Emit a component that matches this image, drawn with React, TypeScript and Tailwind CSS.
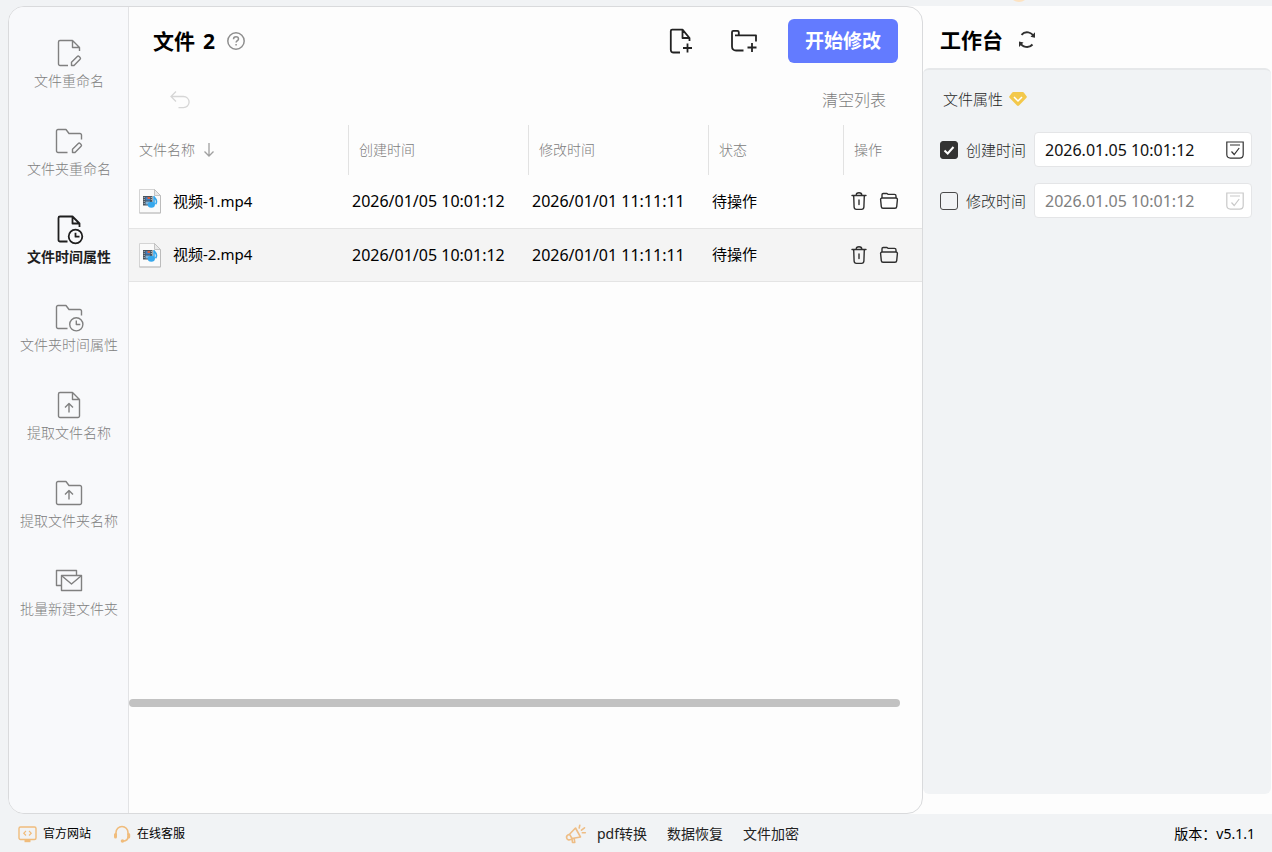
import React, { useState } from "react";

type IconProps = { className?: string };

const DOC_OPEN = "M13 26.5H5a1.5 1.5 0 0 1-1.5-1.5V3A1.5 1.5 0 0 1 5 1.5h12.5l7 7v3.5M17.5 1.5v7h7";
const DOC_FULL = "M17.5 1.5H5A1.5 1.5 0 0 0 3.5 3v22A1.5 1.5 0 0 0 5 26.5h18a1.5 1.5 0 0 0 1.5-1.5V8.5zM17.5 1.5v7h7";
const FOLDER_OPEN = "M12.5 25.5H3A1.5 1.5 0 0 1 1.5 24V4A1.5 1.5 0 0 1 3 2.5h8l3 4h11A1.5 1.5 0 0 1 26.5 8v4.5";
const FOLDER_FULL = "M1.5 24V4A1.5 1.5 0 0 1 3 2.5h8l3 4h11A1.5 1.5 0 0 1 26.5 8v16a1.5 1.5 0 0 1-1.5 1.5H3A1.5 1.5 0 0 1 1.5 24z";
const DOC_PENCIL = "M16.5 26.5v-3.2l5.8-5.8a1.3 1.3 0 0 1 1.8 0l1 1a1.3 1.3 0 0 1 0 1.8l-6.1 6.2z";
const FOLDER_PENCIL = "M17.5 25.5v-3.2l5.8-5.8a1.3 1.3 0 0 1 1.8 0l1 1a1.3 1.3 0 0 1 0 1.8L20 25.5z";

function NavIcon({ paths, bold, clock }: { paths: string[]; bold?: boolean; clock?: [number, number, number] }) {
  return (
    <svg viewBox="0 0 28 28" className="h-7 w-7 overflow-visible" fill="none" stroke="currentColor" strokeWidth={bold ? 1.8 : 1.4} strokeLinejoin="round" aria-hidden="true">
      {paths.map((d) => (
        <path key={d} d={d} />
      ))}
      {clock && (
        <>
          <circle cx={clock[0]} cy={clock[1]} r={clock[2]} />
          <path d={`M${clock[0]} ${clock[1] - 3.8}v4h4`} />
        </>
      )}
    </svg>
  );
}

const NAV = [
  { label: "文件重命名", icon: <NavIcon paths={[DOC_OPEN, DOC_PENCIL]} /> },
  { label: "文件夹重命名", icon: <NavIcon paths={[FOLDER_OPEN, FOLDER_PENCIL]} /> },
  { label: "文件时间属性", icon: <NavIcon bold paths={["M12.5 26.5H5a1.5 1.5 0 0 1-1.5-1.5V3A1.5 1.5 0 0 1 5 1.5h12.5l7 7v3.5M17.5 1.5v7h7"]} clock={[20.5, 21.5, 6.8]} /> },
  { label: "文件夹时间属性", icon: <NavIcon paths={[FOLDER_OPEN]} clock={[21.3, 21.3, 6.6]} /> },
  { label: "提取文件名称", icon: <NavIcon paths={[DOC_FULL, "M14 21.5v-9M10 16.5l4-4 4 4"]} /> },
  { label: "提取文件夹名称", icon: <NavIcon paths={[FOLDER_FULL, "M14 20.5v-9M10 15.5l4-4 4 4"]} /> },
  { label: "批量新建文件夹", icon: <NavIcon paths={["M6.5 18.5h-5v-15h20v5", "M6.5 8.5h20v15h-20z", "M7 9l9.500 8L26 9"]} /> },
];

const FILES = [
  { name: "视频-1.mp4", created: "2026/01/05 10:01:12", modified: "2026/01/01 11:11:11", status: "待操作" },
  { name: "视频-2.mp4", created: "2026/01/05 10:01:12", modified: "2026/01/01 11:11:11", status: "待操作" },
];

function VideoFileIcon() {
  return (
    <svg viewBox="0 0 22 26" className="h-[26px] w-[22px] shrink-0" aria-hidden="true">
      <path d="M.5 1.500h15l6 6v17.500H.5z" fill="#fafafa" stroke="#d4d4d4" />
      <path d="M.5 25h21V8" fill="none" stroke="#bcbcbc" />
      <path d="M15.500 1.500v6h6z" fill="#e9e9e9" stroke="#b8b8b8" strokeWidth=".8" />
      <path d="M4 8h9.500v9.500H4z" fill="#4a535c" />
      <path d="M6.500 9H11v3.500H6.500z" fill="#3f7fc0" />
      <path d="M8.500 9H11v2H8.500z" fill="#d8603f" />
      <path d="M6.500 13.500H11v3H6.500z" fill="#7fb4dc" />
      <path d="M5.200 9v8M12.300 9v4" stroke="#c7ced4" strokeWidth=".9" strokeDasharray="1 1" />
      <ellipse cx="12.300" cy="16.800" rx="3.600" ry="3" fill="#35a7ec" />
      <path d="M15 17V8c.3 2.200 2.500 2.800 2.500 5.500 0 1.400-.5 2.200-1 2.800" fill="none" stroke="#35a7ec" strokeWidth="1.600" />
    </svg>
  );
}

function TrashIcon() {
  return (
    <svg viewBox="0 0 18 20" className="h-5 w-[18px]" fill="none" stroke="#2f2f2f" strokeWidth="1.400" strokeLinecap="round" strokeLinejoin="round" aria-hidden="true">
      <path d="M2 4.500h14M6.200 4.200c0-1.600.8-2.400 2.800-2.400s2.800.8 2.800 2.400M3.700 4.800l.4 11.200c.1 1.700.9 2.400 2.300 2.400h5.200c1.400 0 2.200-.7 2.300-2.400l.4-11.200M9 9v4.500" />
    </svg>
  );
}

function OpenFolderIcon() {
  return (
    <svg viewBox="0 0 20 20" className="h-5 w-5" fill="none" stroke="#2f2f2f" strokeWidth="1.400" strokeLinejoin="round" aria-hidden="true">
      <path d="M3 7V3.700c0-.7.400-1.200 1.200-1.200h3.600c.7 0 1 .9 1.700.9h6c1 0 1.500.5 1.500 1.500V7" />
      <path d="M3.200 7h13.600c1.100 0 1.700.6 1.600 1.600l-.7 7c-.1 1.100-.7 1.700-1.700 1.700H4c-1 0-1.600-.6-1.700-1.700l-.7-7C1.500 7.600 2.100 7 3.200 7z" />
    </svg>
  );
}

function CalendarCheckIcon({ className }: IconProps) {
  return (
    <svg viewBox="0 0 18 18" className={className} fill="none" stroke="currentColor" strokeWidth="1.200" aria-hidden="true">
      <path d="M.8 1h16.400v12.500c0 2.200-1.300 3.600-3.600 3.600H4.400C2.100 17.100.8 15.700.8 13.500z" />
      <path d="M4 4h10M5.500 10.500l2.700 3 5-6.500" />
    </svg>
  );
}

function TimeField({ id, label, checked, onToggle }: { id: string; label: string; checked: boolean; onToggle: () => void }) {
  return (
    <div className="flex items-center">
      <span className="relative flex size-[18px] shrink-0">
        <input
          id={id}
          type="checkbox"
          checked={checked}
          onChange={onToggle}
          className="peer size-[18px] appearance-none rounded-[3px] border border-[#4a4a4a] bg-transparent checked:border-[#333333] checked:bg-[#333333]"
        />
        <svg viewBox="0 0 18 18" className="pointer-events-none absolute inset-0 hidden peer-checked:block" fill="none" stroke="#fff" strokeWidth="2" aria-hidden="true">
          <path d="M4.500 9.500l3.200 3L13.500 6" />
        </svg>
      </span>
      <label htmlFor={id} className="ml-2 shrink-0 text-[15px] font-light leading-5 text-[#1f1f1f]">
        {label}
      </label>
      <div className={`ml-2 flex h-[35px] min-w-0 flex-1 items-center rounded border border-[#e4e5e7] bg-white px-[10px] ${checked ? "text-[#111111]" : "text-[#808080]"}`}>
        <input type="text" aria-label={`${label}值`} defaultValue="2026.01.05 10:01:12" disabled={!checked} className="min-w-0 flex-1 bg-transparent text-base outline-none" />
        <button type="button" aria-label="选择日期" disabled={!checked} className="mr-[-3px] shrink-0">
          <CalendarCheckIcon className={checked ? "size-[18px] text-[#333333]" : "size-[18px] text-[#c9c9c9]"} />
        </button>
      </div>
    </div>
  );
}

const HEAD = "h-[50px] p-0 text-left align-middle text-sm font-light text-[#7c7c7c]";

export default function App() {
  const [createdOn, setCreatedOn] = useState(true);
  const [modifiedOn, setModifiedOn] = useState(false);

  return (
    <div className="relative flex min-h-screen flex-col overflow-hidden bg-[#f1f3f5] pt-[6px] font-['Noto_Sans','Noto_Sans_CJK_SC',sans-serif] text-black">
      <span className="absolute right-[243px] top-[-18px] size-5 rounded-full bg-[#fde3c2]" />
      <div className="flex flex-1">
        <div className="relative z-10 ml-2 flex min-w-0 flex-1 overflow-hidden rounded-2xl border border-[#d9dadc] bg-[#fdfdfd]">
          <nav className="w-[120px] shrink-0 border-r border-[#e2e3e5] bg-[#f8f9fb] pl-px pt-8">
            <ul className="flex flex-col gap-9">
              {NAV.map((item, i) => (
                <li key={item.label}>
                  <button type="button" className={`flex w-full flex-col items-center gap-1 whitespace-nowrap text-sm leading-5 ${i === 2 ? "font-bold text-[#1f1f1f]" : "font-light text-[#808080]"}`}>
                    {item.icon}
                    <span>{item.label}</span>
                  </button>
                </li>
              ))}
            </ul>
          </nav>

          <main className="flex min-w-0 flex-1 flex-col pt-3">
            <header className="flex h-11 items-center pl-6 pr-6">
              <h1 className="flex gap-2 text-[21px] font-bold leading-7">
                <span>文件</span>
                <span>2</span>
              </h1>
              <button type="button" aria-label="帮助" className="ml-3">
                <svg viewBox="0 0 18 18" className="size-[18px]" fill="none" stroke="#8f8f8f" strokeWidth="1.500" aria-hidden="true">
                  <circle cx="9" cy="9" r="8.200" />
                  <path d="M6.500 7.200c0-1.600 1.100-2.500 2.500-2.500s2.500.9 2.500 2.200c0 1.700-2.400 1.800-2.400 3.700M9.100 12v1.600" />
                </svg>
              </button>
              <div className="ml-auto flex items-center">
                <button type="button" aria-label="添加文件">
                  <svg viewBox="0 0 28 28" className="size-7" fill="none" stroke="#222" strokeWidth="1.800" strokeLinejoin="round" aria-hidden="true">
                    <path d="M13 25.500H6.500c-1.700 0-2.700-1-2.700-2.700V4c0-.8.500-1.300 1.300-1.300h10.400l7 8.300v3M15.500 2.700V11h7M20.500 16.500v9M16 21h9" />
                  </svg>
                </button>
                <button type="button" aria-label="添加文件夹" className="ml-[35px]">
                  <svg viewBox="0 0 28 28" className="size-7" fill="none" stroke="#222" strokeWidth="1.800" strokeLinejoin="round" aria-hidden="true">
                    <path d="M13.500 23.500H6c-2.500 0-4-1.500-4-4V5.200c0-.8.500-1.300 1.300-1.300h4.200c.8 0 1.300.5 1.300 1.300V8M5 8.300h21v6.200M22 16v9M17.500 20.500h9" />
                  </svg>
                </button>
                <button type="button" className="ml-[30px] h-11 w-[110px] rounded-md bg-[#637bff] text-[19px] font-bold leading-6 text-white">
                  开始修改
                </button>
              </div>
            </header>

            <div className="mt-[23px] flex h-7 items-center justify-between pl-[41px] pr-9">
              <button type="button" aria-label="撤销">
                <svg viewBox="0 0 20 20" className="size-5" fill="none" stroke="#d6d6d6" strokeWidth="1.300" aria-hidden="true">
                  <path d="M6 1.500L1 6.500l5 5M1 6.500h12.500a5.300 5.300 0 0 1 0 11.200H8.500" />
                </svg>
              </button>
              <button type="button" className="text-base font-light leading-6 text-[#7c7c7c]">
                清空列表
              </button>
            </div>

            <table className="mt-[11px] w-full table-fixed border-collapse">
              <colgroup>
                <col />
                <col className="w-[180px]" />
                <col className="w-[180px]" />
                <col className="w-[135px]" />
                <col className="w-[78px]" />
              </colgroup>
              <thead>
                <tr>
                  <th scope="col" className={HEAD}>
                    <div className="flex h-[50px] items-center border-r border-[#e2e2e2] pl-[10px]">
                      文件名称
                      <svg viewBox="0 0 12 16" className="ml-2 h-4 w-3" fill="none" stroke="#a0a0a0" strokeWidth="1.300" aria-hidden="true">
                        <path d="M6 1v13M1.500 9.500L6 14l4.500-4.500" />
                      </svg>
                    </div>
                  </th>
                  {["创建时间", "修改时间", "状态"].map((h) => (
                    <th key={h} scope="col" className={HEAD}>
                      <div className="flex h-[50px] items-center border-r border-[#e2e2e2] pl-[10px]">{h}</div>
                    </th>
                  ))}
                  <th scope="col" className={HEAD}>
                    <div className="flex h-[50px] items-center pl-[10px]">操作</div>
                  </th>
                </tr>
              </thead>
              <tbody>
                {FILES.map((f, i) => (
                  <tr key={f.name} className={`h-[53px] border-b border-[#e4e4e4] ${i === 1 ? "bg-[#f4f4f4]" : ""}`}>
                    <td className="p-0 pl-[10px]">
                      <div className="flex items-center gap-3 text-[15px]">
                        <VideoFileIcon />
                        <span>{f.name}</span>
                      </div>
                    </td>
                    <td className="whitespace-nowrap p-0 pl-[3px] text-base">{f.created}</td>
                    <td className="whitespace-nowrap p-0 pl-[3px] text-base">{f.modified}</td>
                    <td className="p-0 pl-[3px] text-[15px]">{f.status}</td>
                    <td className="p-0 pl-[6px]">
                      <div className="flex items-center gap-[11px]">
                        <button type="button" aria-label="删除">
                          <TrashIcon />
                        </button>
                        <button type="button" aria-label="打开文件夹">
                          <OpenFolderIcon />
                        </button>
                      </div>
                    </td>
                  </tr>
                ))}
              </tbody>
            </table>
            <div className="mb-[106px] mr-[22px] mt-auto h-2 rounded-full bg-[#c2c2c2]" />
          </main>
        </div>

        <aside className="-ml-5 flex w-[369px] shrink-0 flex-col bg-[#fdfdfd] pb-5 pl-5">
          <header className="flex h-[62px] items-center gap-[14px] pb-[2px] pl-[17px] pt-2">
            <h2 className="text-[21px] font-bold leading-7">工作台</h2>
            <button type="button" aria-label="刷新">
              <svg viewBox="0 0 20 20" className="size-5" fill="none" stroke="#2f2f2f" strokeWidth="1.900" aria-hidden="true">
                <path d="M4.500 4.800A7.300 7.300 0 0 1 16.800 7M15.500 14.500A7.300 7.300 0 0 1 3.200 12.300" />
                <path d="M18 2.200v5.600l-4.500-1zM2 17.100v-5.600l4.500 1z" fill="#2f2f2f" stroke="none" />
              </svg>
            </button>
          </header>
          <section className="mr-px flex-1 rounded-md border-t-2 border-[#e6e8ea] bg-[#f1f3f5] pl-[17px] pr-[19px] pt-[19px]">
            <h3 className="flex items-center gap-[6px] pl-[3px] text-[15px] font-light leading-5 text-[#1f1f1f]">
              文件属性
              <svg viewBox="0 0 18 16" className="h-4 w-[18px]" aria-hidden="true">
                <path d="M4.300 1h9.400c.5 0 .8.200 1.100.6L17.600 5.200c.4.500.3 1-.1 1.500l-7.500 7.900c-.6.600-1.400.600-2 0L.5 6.700C.1 6.200 0 5.700.4 5.200l2.800-3.600c.3-.4.600-.6 1.100-.6z" fill="#f3c84b" />
                <path d="M5 6l4 4 4-4" fill="none" stroke="#fff" strokeWidth="1.500" />
              </svg>
            </h3>
            <div className="mt-[23px] flex flex-col gap-4">
              <TimeField id="created" label="创建时间" checked={createdOn} onToggle={() => setCreatedOn(!createdOn)} />
              <TimeField id="modified" label="修改时间" checked={modifiedOn} onToggle={() => setModifiedOn(!modifiedOn)} />
            </div>
          </section>
        </aside>
      </div>

      <footer className="grid h-[38px] grid-cols-3 items-center pl-[18px] pr-[17px] pt-[2px]">
        <div className="flex items-center gap-[22px] text-xs leading-5">
          <a href="#site" className="flex items-center gap-[6px]">
            <svg viewBox="0 0 19 18" className="h-[18px] w-[19px]" fill="none" stroke="#f0bc7c" strokeWidth="1.400" aria-hidden="true">
              <rect x="1" y="2" width="17" height="12.500" rx="1.500" />
              <path d="M8 6L5.800 8.200 8 10.500M11 6l2.200 2.200-2.200 2.300" strokeWidth="1.200" />
              <path d="M6.500 16h6" strokeWidth="2.400" />
            </svg>
            官方网站
          </a>
          <a href="#support" className="flex items-center gap-[6px]">
            <svg viewBox="0 0 18 18" className="size-[18px]" fill="none" stroke="#f0bc7c" strokeWidth="1.600" strokeLinecap="round" aria-hidden="true">
              <path d="M3 9.500V7.500a6 6 0 0 1 12 0v2M15 12c0 3-2.500 4-5 4.300" />
              <path d="M2.500 9.500v2.500M15.700 9.500v2.500" strokeWidth="3" />
              <circle cx="9.500" cy="16" r="1" fill="#f0bc7c" />
            </svg>
            在线客服
          </a>
        </div>
        <div className="flex items-center justify-center gap-5 whitespace-nowrap pl-[91px] text-sm leading-5 text-[#222222]">
          <a href="#pdf" className="flex items-center gap-[10px]">
            <svg viewBox="0 0 22 20" className="h-5 w-[22px]" fill="none" stroke="#eebd85" strokeWidth="1.600" strokeLinejoin="round" strokeLinecap="round" aria-hidden="true">
              <path d="M10.500 4l5 9-8.500 1.500-2.500-4.300zM4.600 10.300c-2.300.7-3.400 1.800-3 3.600.4 1.800 2.300 2.400 4 1.700l1.800-1M7 15l.5 3.500h2.300l-.6-3.800M14.200 4l.6-2.800M16.500 6.200l3-2.400M17.300 8.700h3" />
            </svg>
            pdf转换
          </a>
          <a href="#recover">数据恢复</a>
          <a href="#encrypt">文件加密</a>
        </div>
        <p className="text-right text-sm leading-5">版本：v5.1.1</p>
      </footer>
    </div>
  );
}
